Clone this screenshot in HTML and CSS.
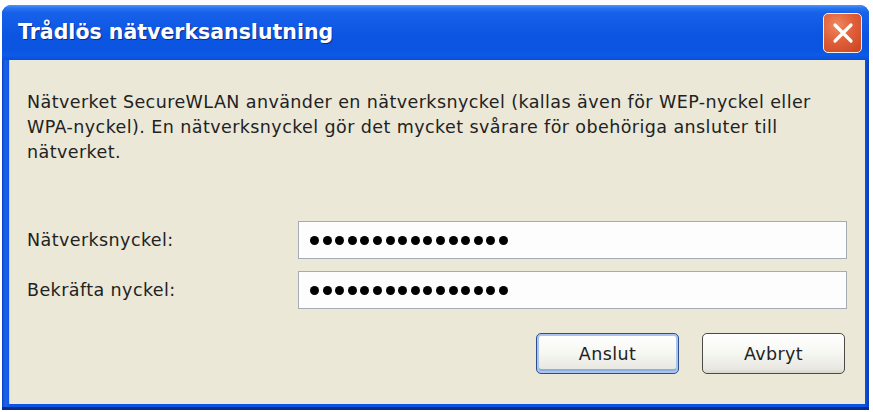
FILE: index.html
```html
<!DOCTYPE html>
<html lang="sv">
<head>
<meta charset="utf-8">
<title>Trådlös nätverksanslutning</title>
<link rel="stylesheet" href="styles.css">
</head>
<body>
<div class="window">
  <div class="titlebar">
    <div class="title">Trådlös nätverksanslutning</div>
    <button class="close" aria-label="Stäng">
      <svg width="24" height="24" viewBox="0 0 24 24"><path d="M4 4 L20 20 M20 4 L4 20" stroke="#fff" stroke-width="3.2" stroke-linecap="round" fill="none"/></svg>
    </button>
  </div>
  <div class="body">
    <p class="desc">Nätverket SecureWLAN använder en nätverksnyckel (kallas även för WEP-nyckel eller WPA-nyckel). En nätverksnyckel gör det mycket svårare för obehöriga ansluter till nätverket.</p>
    <div class="fields">
      <label class="label">Nätverksnyckel:</label>
      <div class="input"><span class="d"></span><span class="d"></span><span class="d"></span><span class="d"></span><span class="d"></span><span class="d"></span><span class="d"></span><span class="d"></span><span class="d"></span><span class="d"></span><span class="d"></span><span class="d"></span><span class="d"></span><span class="d"></span><span class="d"></span><span class="d"></span></div>
      <label class="label">Bekräfta nyckel:</label>
      <div class="input"><span class="d"></span><span class="d"></span><span class="d"></span><span class="d"></span><span class="d"></span><span class="d"></span><span class="d"></span><span class="d"></span><span class="d"></span><span class="d"></span><span class="d"></span><span class="d"></span><span class="d"></span><span class="d"></span><span class="d"></span><span class="d"></span></div>
    </div>
    <div class="buttons">
      <button class="btn default">Anslut</button>
      <button class="btn">Avbryt</button>
    </div>
  </div>
</div>
</body>
</html>
```
FILE: styles.css
```css
html, body {
  margin: 0;
  padding: 0;
  background: #ffffff;
}
body {
  width: 873px;
  height: 412px;
  overflow: hidden;
}
.window {
  margin: 5px 0 0 2px;
  width: 867px;
  height: 405px;
  box-sizing: border-box;
  border-radius: 9px 9px 0 0;
  background: linear-gradient(to right, #0843c4 0, #1e63e8 3px, #0a56e4 8px, #0a56e4 calc(100% - 5px), #0a3fc0 100%);
  display: flex;
  flex-direction: column;
  padding: 0 4px 6px 7px;
  box-shadow: inset 0 -3px 0 #0a2a8c;
}
.titlebar {
  height: 55px;
  margin: 0 -4px 0 -7px;
  border-radius: 9px 9px 0 0;
  background: linear-gradient(to bottom, #4a98fa 0, #2a74f0 3px, #1660ea 8px, #0b55e2 30px, #0a54e0 44px, #0c5be8 50px, #0a4fd6 55px);
  display: flex;
  align-items: center;
  justify-content: space-between;
  padding: 0 7px 0 16px;
  box-sizing: border-box;
}
.title {
  font-family: "DejaVu Sans", sans-serif;
  font-weight: bold;
  font-size: 20.5px;
  color: #ffffff;
  text-shadow: 1px 1px 0 #0a2a8c;
  padding-bottom: 1px;
}
.close {
  width: 39px;
  height: 40px;
  margin-top: 1px;
  border: 1.5px solid #f4f0ee;
  border-radius: 5px;
  background: radial-gradient(circle at 35% 30%, #f0885e 0, #e0603a 45%, #c9431f 100%);
  display: flex;
  align-items: center;
  justify-content: center;
  padding: 0;
  box-sizing: border-box;
}
.body {
  flex: 1;
  background: #ebe8d8;
  border-left: 1px solid #b8d4f8;
  padding: 30px 19px 0 17px;
  display: flex;
  flex-direction: column;
  font-family: "DejaVu Sans", sans-serif;
  font-size: 17.5px;
  letter-spacing: 0.42px;
  color: #222;
}
.desc {
  margin: 0;
  line-height: 25px;
  width: 792px;
}
.fields {
  margin-top: 56px;
  display: grid;
  grid-template-columns: 271px 549px;
  row-gap: 12px;
  align-items: center;
}
.label {
  line-height: 38px;
}
.input {
  height: 38px;
  box-sizing: border-box;
  border: 1px solid #a5acb5;
  background: #fdfdfd;
  display: flex;
  align-items: center;
  gap: 3.6px;
  padding-left: 11px;
}
.d {
  width: 9px;
  height: 9px;
  border-radius: 50%;
  background: #000;
}
.buttons {
  margin-top: 24px;
  display: flex;
  justify-content: flex-end;
  gap: 23px;
  padding-right: 1px;
}
.btn {
  width: 143px;
  height: 41px;
  box-sizing: border-box;
  border: 1.5px solid #4a4a48;
  border-radius: 5px;
  background: linear-gradient(to bottom, #ffffff 0, #f6f6f2 50%, #e8e7e0 90%, #d8d6cc 100%);
  font-family: "DejaVu Sans", sans-serif;
  font-size: 17.5px;
  letter-spacing: 0.4px;
  color: #222;
  padding: 0;
}
.btn.default {
  border-color: #2f4d8a;
  box-shadow: inset 0 0 0 2px #a9c4ee, inset 0 -2px 0 2px #8aaee6;
}
```
